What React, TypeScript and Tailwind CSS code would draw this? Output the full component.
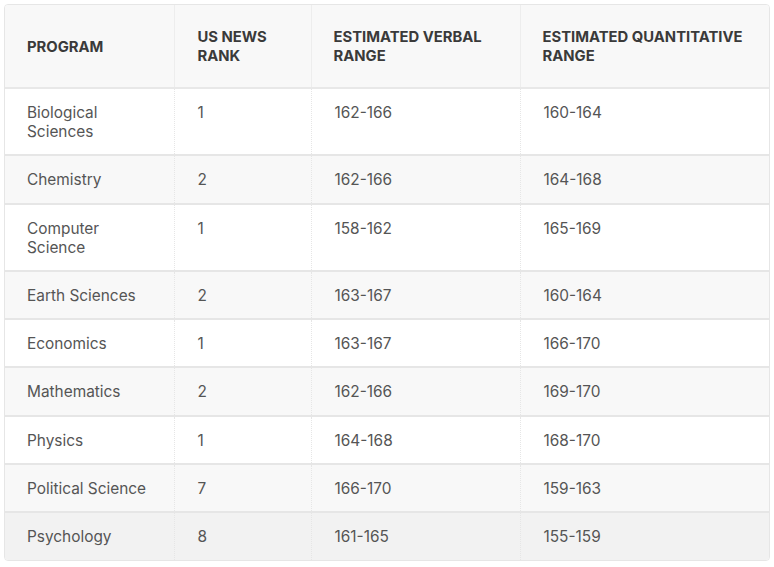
import React from "react";

const rows = [
  ["Biological Sciences", "1", "162-166", "160-164"],
  ["Chemistry", "2", "162-166", "164-168"],
  ["Computer Science", "1", "158-162", "165-169"],
  ["Earth Sciences", "2", "163-167", "160-164"],
  ["Economics", "1", "163-167", "166-170"],
  ["Mathematics", "2", "162-166", "169-170"],
  ["Physics", "1", "164-168", "168-170"],
  ["Political Science", "7", "166-170", "159-163"],
  ["Psychology", "8", "161-165", "155-159"],
];

const rowBg = [
  "bg-white",
  "bg-[#f8f8f8]",
  "bg-white",
  "bg-[#f8f8f8]",
  "bg-white",
  "bg-[#f8f8f8]",
  "bg-white",
  "bg-[#f8f8f8]",
  "bg-[#f2f2f2]",
];

export default function App() {
  return (
    <div className="p-1 bg-white w-[774px] h-[567px]" style={{ fontFamily: "Inter, 'Open Sans', sans-serif" }}>
      <div className="w-[766px] border border-[#e6e6e6] rounded-[4px] overflow-hidden">
        <table className="w-full table-fixed border-collapse text-[15.4px] leading-[19px]">
          <colgroup>
            <col className="w-[169px]" />
            <col className="w-[137px]" />
            <col className="w-[209px]" />
            <col />
          </colgroup>
          <thead>
            <tr className="bg-[#f8f8f8] border-b-2 border-[#e8e8e8]">
              <th className="h-[83px] pt-[2px] pl-[22px] pr-3 text-left align-middle font-bold text-[14.8px] text-[#3a3a3a] leading-[19px]">PROGRAM</th>
              <th className="pt-[2px] pl-[23px] pr-3 text-left align-middle font-bold text-[14.8px] text-[#3a3a3a] leading-[19px] border-l border-[#ededed]">US NEWS<br />RANK</th>
              <th className="pt-[2px] pl-[22px] pr-3 text-left align-middle font-bold text-[14.8px] text-[#3a3a3a] leading-[19px] border-l border-[#ededed]">ESTIMATED VERBAL<br />RANGE</th>
              <th className="pt-[2px] pl-[22px] pr-2 text-left align-middle font-bold text-[14.8px] text-[#3a3a3a] leading-[19px] border-l border-[#ededed]">ESTIMATED QUANTITATIVE<br />RANGE</th>
            </tr>
          </thead>
          <tbody>
            {rows.map((r, i) => (
              <tr key={i} className={`${rowBg[i]} ${i < rows.length - 1 ? "border-b-2 border-[#e6e6e6]" : ""}`}>
                {r.map((c, j) => (
                  <td
                    key={j}
                    className={`align-top pt-[14px] pb-[13.3px] text-[#555555] ${j === 0 ? "pl-[22px] pr-5" : "pl-[23px] pr-3 border-l border-dotted border-[#e6e6e6]"}`}
                  >
                    {c}
                  </td>
                ))}
              </tr>
            ))}
          </tbody>
        </table>
      </div>
    </div>
  );
}
